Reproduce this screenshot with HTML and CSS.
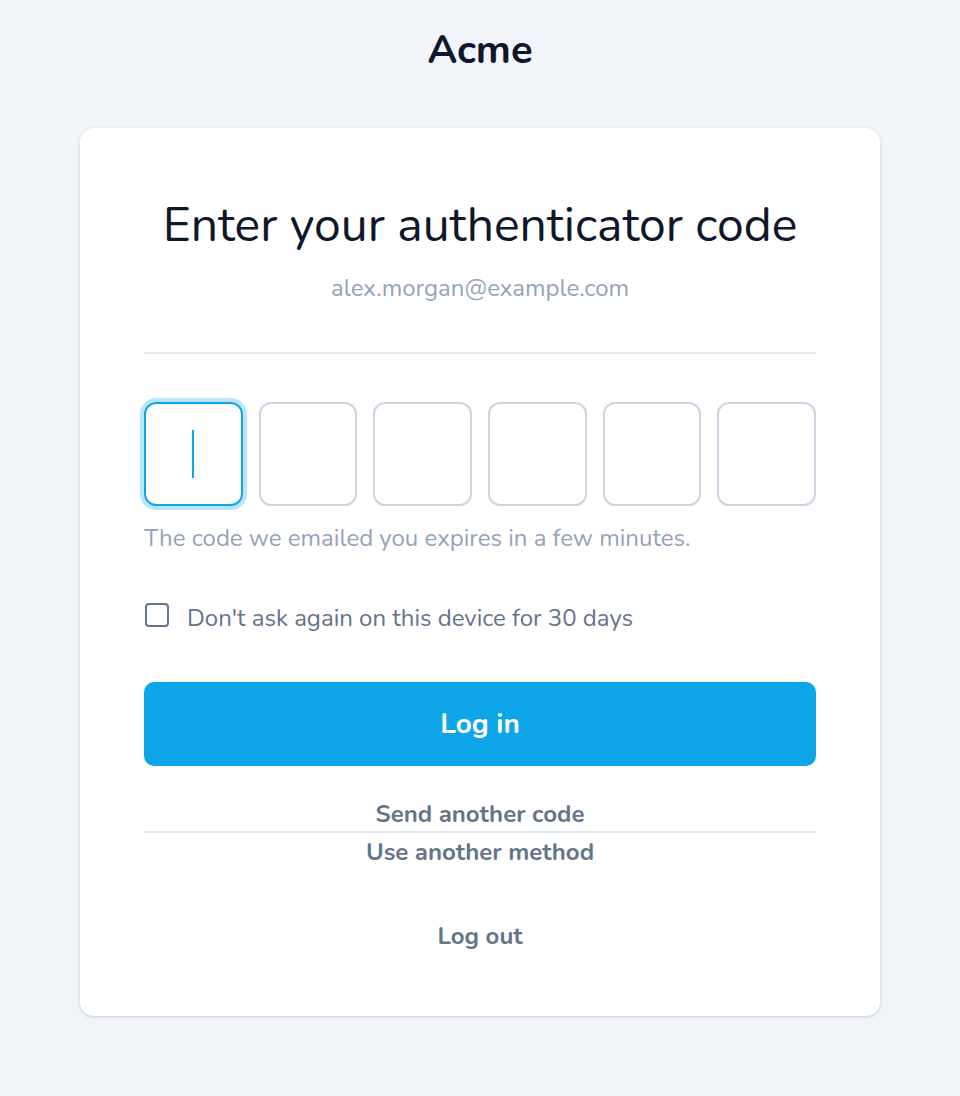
FILE: index.html
```html
<!DOCTYPE html>
<html lang="en">
<head>
<meta charset="utf-8">
<title>Acme – Enter your authenticator code</title>
<link rel="stylesheet" href="styles.css">
</head>
<body>
  <header class="brand">Acme</header>
  <main class="card">
    <h1 class="title">Enter your authenticator code</h1>
    <p class="email">alex.morgan@example.com</p>
    <hr class="divider">
    <div class="code">
      <div class="digit focused"><span class="caret"></span></div>
      <div class="digit"></div>
      <div class="digit"></div>
      <div class="digit"></div>
      <div class="digit"></div>
      <div class="digit"></div>
    </div>
    <p class="help">The code we emailed you expires in a few minutes.</p>
    <label class="remember">
      <span class="box"></span>
      <span>Don't ask again on this device for 30 days</span>
    </label>
    <button class="primary" type="button">Log in</button>
    <div class="links">
      <a class="link" href="#">Send another code</a>
      <hr class="sep">
      <a class="link second" href="#">Use another method</a>
    </div>
    <a class="link logout" href="#">Log out</a>
  </main>
</body>
</html>
```

FILE: styles.css
```css
* { box-sizing: border-box; }
html, body { margin: 0; padding: 0; }
body {
  background: #f1f5f9;
  font-family: "Nunito", "Lato", "Noto Sans", sans-serif;
  color: #0f172a;
  height: 1096px;
  display: flex;
  flex-direction: column;
  align-items: center;
}
.brand {
  margin-top: 26px;
  height: 48px;
  line-height: 48px;
  font-size: 40px;
  font-weight: 700;
  color: #0f172a;
}
.card {
  margin-top: 54px;
  width: 800px;
  background: #fff;
  border-radius: 14px;
  box-shadow: 0 1px 4px rgba(15, 23, 42, 0.12), 0 1px 2px rgba(15, 23, 42, 0.06);
  padding: 64px 64px 63px;
  display: flex;
  flex-direction: column;
  align-items: stretch;
}
.title {
  margin: 0;
  font-size: 48px;
  line-height: 66px;
  font-weight: 400;
  text-align: center;
  color: #0f172a;
}
.email {
  margin: 14px 0 0;
  font-size: 24px;
  line-height: 32px;
  text-align: center;
  color: #94a3b8;
}
.divider {
  margin: 48px 0 0;
  border: 0;
  border-top: 2px solid #e2e8f0;
}
.code {
  margin-top: 48px;
  display: grid;
  grid-template-columns: repeat(6, 1fr);
  gap: 16px;
}
.digit {
  height: 104px;
  border: 2px solid #cbd5e1;
  border-radius: 12px;
  display: flex;
  align-items: center;
  justify-content: center;
}
.digit.focused {
  border-color: #0ea5e9;
  box-shadow: 0 0 0 4px #bae6fd;
}
.caret {
  width: 2px;
  height: 48px;
  background: #0ea5e9;
}
.help {
  margin: 16px 0 0;
  font-size: 24px;
  line-height: 32px;
  color: #94a3b8;
}
.remember {
  margin-top: 48px;
  display: flex;
  align-items: flex-start;
  gap: 18px;
  font-size: 24px;
  line-height: 32px;
  color: #64748b;
}
.box {
  width: 24px;
  height: 24px;
  margin-top: 1px;
  margin-left: 1px;
  border: 2px solid #64748b;
  border-radius: 4px;
  flex: none;
}
.primary {
  margin-top: 48px;
  height: 84px;
  border: 0;
  border-radius: 10px;
  background: #0ea5e9;
  color: #fff;
  font-family: inherit;
  font-size: 28px;
  font-weight: 700;
}
.links {
  margin-top: 31px;
  display: flex;
  flex-direction: column;
  align-items: stretch;
}
.link {
  display: block;
  text-align: center;
  font-size: 24px;
  font-weight: 700;
  line-height: 34px;
  color: #64748b;
  text-decoration: none;
}
.link.second {
  margin-top: 2px;
}
.sep {
  margin: 0;
  border: 0;
  border-top: 2px solid #e2e8f0;
}
.logout {
  margin-top: 50px;
}
```
